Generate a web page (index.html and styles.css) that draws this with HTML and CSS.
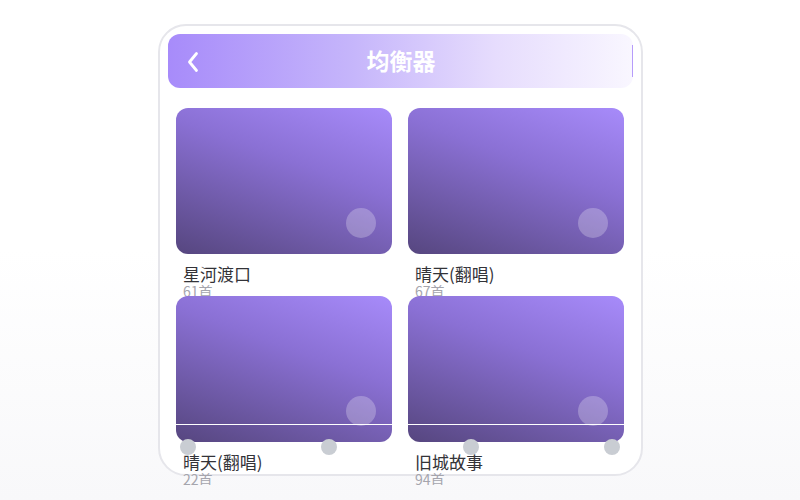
FILE: index.html
```html
<!DOCTYPE html>
<html lang="zh">
<head>
<meta charset="utf-8">
<title>均衡器</title>
<link rel="stylesheet" href="styles.css">
</head>
<body>
<div class="frame">
  <header class="topbar">
    <svg class="back" width="14" height="22" viewBox="0 0 14 22"><path d="M10.5 2.5 L3.5 11 L10.5 19.5" fill="none" stroke="#fff" stroke-width="2.8" stroke-linecap="round" stroke-linejoin="round"/></svg>
    <h1 class="title">均衡器</h1>
  </header>
  <div class="grid">
    <div class="item">
      <div class="card"><span class="dot"></span></div>
      <div class="name">星河渡口</div>
      <div class="count">61首</div>
    </div>
    <div class="item">
      <div class="card"><span class="dot"></span></div>
      <div class="name">晴天(翻唱)</div>
      <div class="count">67首</div>
    </div>
    <div class="item">
      <div class="card"><span class="dot"></span></div>
      <div class="name">晴天(翻唱)</div>
      <div class="count">22首</div>
    </div>
    <div class="item">
      <div class="card"><span class="dot"></span></div>
      <div class="name">旧城故事</div>
      <div class="count">94首</div>
    </div>
  </div>
  <div class="track-line"></div>
  <div class="thumbs">
    <span class="thumb"></span>
    <span class="thumb"></span>
    <span class="thumb"></span>
    <span class="thumb"></span>
  </div>
</div>
</body>
</html>
```

FILE: styles.css
```css
html, body {
  margin: 0;
  padding: 0;
}
body {
  width: 800px;
  height: 500px;
  overflow: hidden;
  background: linear-gradient(180deg, #ffffff 0%, #ffffff 50%, #f8f8fa 100%);
  font-family: "Noto Sans CJK SC", "Noto Sans", sans-serif;
}
.frame {
  position: relative;
  box-sizing: border-box;
  width: 485px;
  height: 452px;
  margin: 24px 0 0 158px;
  border: 2px solid #e6e6eb;
  border-radius: 28px;
  background: #fff;
  padding: 8px;
}
.topbar {
  position: relative;
  height: 54px;
  border-radius: 12px;
  background: linear-gradient(90deg, #a78bfa 0%, #c6b6fb 40%, #e6dcfd 70%, rgba(245, 241, 255, 0.6) 100%);
  display: flex;
  align-items: center;
  justify-content: center;
}
.topbar::after {
  content: "";
  position: absolute;
  right: 0;
  top: 11px;
  width: 1px;
  height: 32px;
  background: #b69cfa;
}
.back {
  position: absolute;
  left: 18px;
  top: 17px;
}
.title {
  margin: 0 0 0 1px;
  color: #fff;
  font-size: 23px;
  font-weight: 700;
  line-height: 30px;
  transform: translateY(-1px);
}
.grid {
  margin-top: 20px;
  padding: 0 8px;
  display: grid;
  grid-template-columns: 216px 216px;
  column-gap: 16px;
  grid-auto-rows: 188px;
}
.item {
  min-width: 0;
}
.card {
  position: relative;
  height: 146px;
  border-radius: 12px;
  background: linear-gradient(200deg, #a78bfa 0%, #8a70d4 40%, #56467f 100%);
}
.dot {
  position: absolute;
  right: 16px;
  bottom: 16px;
  width: 30px;
  height: 30px;
  border-radius: 50%;
  background: rgba(255, 255, 255, 0.25);
}
.name {
  margin: 10px 0 0 7px;
  font-size: 17px;
  line-height: 20px;
  color: #333338;
}
.count {
  margin-left: 7px;
  height: 13px;
  font-size: 14px;
  line-height: 15px;
  color: #a5a5ad;
  overflow: hidden;
}
.track-line {
  position: absolute;
  left: 10px;
  top: 398px;
  width: 461px;
  height: 1px;
  background: #fff;
}
.thumbs {
  position: absolute;
  left: 20px;
  top: 413px;
  width: 440px;
  display: flex;
  justify-content: space-between;
}
.thumb {
  width: 16px;
  height: 16px;
  border-radius: 50%;
  background: #c9cdd3;
}
```
